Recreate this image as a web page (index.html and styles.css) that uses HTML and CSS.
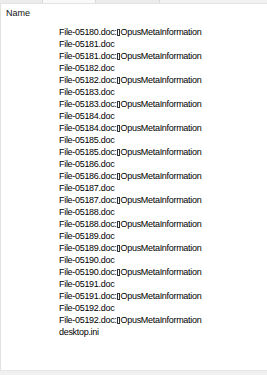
FILE: index.html
```html
<!DOCTYPE html>
<html lang="en">
<head>
    <meta charset="UTF-8">
    <meta name="viewport" content="width=device-width, initial-scale=1.0">
    <title>Name</title>
    <link rel="stylesheet" href="styles.css">
</head>
<body>
<!-- 顶部残留的标签条 -->
<div class="tabs">
    <span class="tab t1"></span>
    <span class="tab t2"></span>
    <span class="tab t3"></span>
    <span class="tab t4"></span>
</div>

<div class="pane">
    <div class="header">Name</div>
    <ul class="files">
        <li>File-05180.doc:<span class="box"></span>OpusMetaInformation</li>
        <li>File-05181.doc</li>
        <li>File-05181.doc:<span class="box"></span>OpusMetaInformation</li>
        <li>File-05182.doc</li>
        <li>File-05182.doc:<span class="box"></span>OpusMetaInformation</li>
        <li>File-05183.doc</li>
        <li>File-05183.doc:<span class="box"></span>OpusMetaInformation</li>
        <li>File-05184.doc</li>
        <li>File-05184.doc:<span class="box"></span>OpusMetaInformation</li>
        <li>File-05185.doc</li>
        <li>File-05185.doc:<span class="box"></span>OpusMetaInformation</li>
        <li>File-05186.doc</li>
        <li>File-05186.doc:<span class="box"></span>OpusMetaInformation</li>
        <li>File-05187.doc</li>
        <li>File-05187.doc:<span class="box"></span>OpusMetaInformation</li>
        <li>File-05188.doc</li>
        <li>File-05188.doc:<span class="box"></span>OpusMetaInformation</li>
        <li>File-05189.doc</li>
        <li>File-05189.doc:<span class="box"></span>OpusMetaInformation</li>
        <li>File-05190.doc</li>
        <li>File-05190.doc:<span class="box"></span>OpusMetaInformation</li>
        <li>File-05191.doc</li>
        <li>File-05191.doc:<span class="box"></span>OpusMetaInformation</li>
        <li>File-05192.doc</li>
        <li>File-05192.doc:<span class="box"></span>OpusMetaInformation</li>
        <li>desktop.ini</li>
    </ul>
</div>

<div class="footer"></div>
</body>
</html>
```

FILE: styles.css
```css
/* 重置样式 */
* {
    margin: 0;
    padding: 0;
    box-sizing: border-box;
}

body {
    font-family: "Liberation Sans", Arial, sans-serif;
    font-size: 9px;
    color: #000;
    background: #fff;
    width: 267px;
    height: 375px;
    display: flex;
    flex-direction: column;
    overflow: hidden;
}

/* 顶部标签条 */
.tabs {
    height: 4px;
    display: flex;
    background: #f0f0f0;
    border-bottom: 1px solid #e3e3e3;
}

.tab {
    height: 3px;
    border-right: 1px solid #dadada;
}

.t1 { width: 43px; background: #ececec; }
.t2 { width: 53px; background: #f9f9f9; }
.t3 { width: 64px; background: #ececec; }
.t4 { flex: 1; background: #f2f2f2; border-right: none; }

/* 文件列表区域 */
.pane {
    flex: 1;
    border-left: 1px solid #e2e2e2;
    padding: 3px 0 0 5px;
}

.header {
    height: 19px;
    line-height: 12px;
    color: #111;
}

.files {
    list-style: none;
    padding-left: 53px;
}

.files li {
    height: 12px;
    line-height: 12px;
    letter-spacing: -0.3px;
    white-space: nowrap;
}

/* 文件名中无法显示的字符 */
.box {
    display: inline-block;
    width: 3px;
    height: 7px;
    border: 1px solid #333;
    margin: 0 1px 0 0;
    vertical-align: -0.5px;
}

/* 底部状态条 */
.footer {
    height: 5px;
    background: #f0f0f0;
    border-top: 1px solid #e6e6e6;
}
```
